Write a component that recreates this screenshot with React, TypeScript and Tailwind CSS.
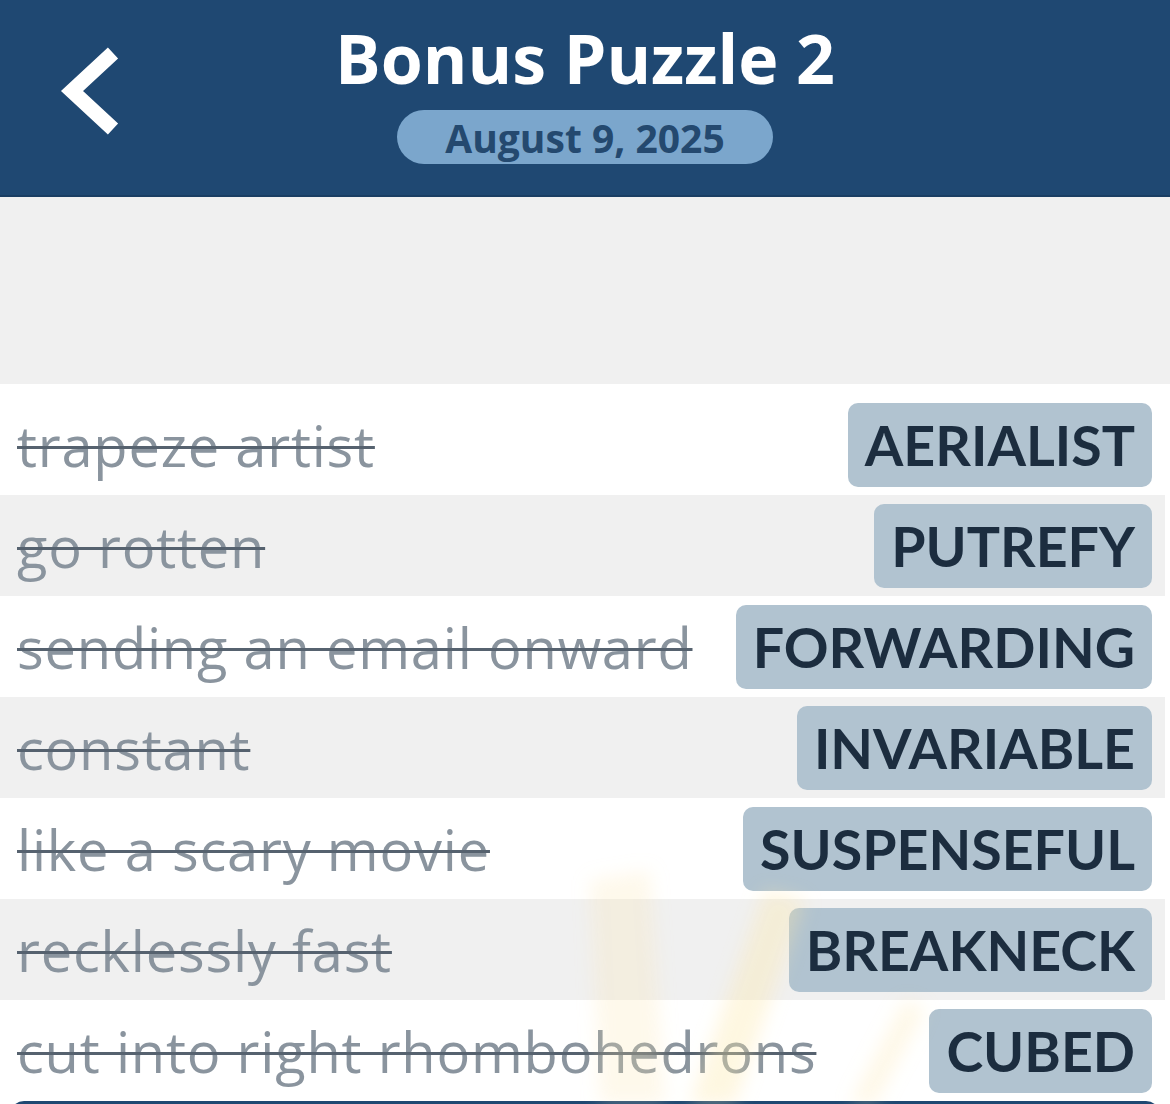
import { useMemo } from "react";

type Entry = { clue: string; answer: string };

const entries: Entry[] = [
  { clue: "trapeze artist", answer: "AERIALIST" },
  { clue: "go rotten", answer: "PUTREFY" },
  { clue: "sending an email onward", answer: "FORWARDING" },
  { clue: "constant", answer: "INVARIABLE" },
  { clue: "like a scary movie", answer: "SUSPENSEFUL" },
  { clue: "recklessly fast", answer: "BREAKNECK" },
  { clue: "cut into right rhombohedrons", answer: "CUBED" },
];

function BackChevron() {
  return (
    <svg width="70" height="100" viewBox="0 0 70 100" fill="none">
      <path
        d="M55 12 L14 50 L55 88"
        stroke="white"
        strokeWidth="15"
        strokeLinecap="butt"
        strokeLinejoin="miter"
      />
    </svg>
  );
}

function Header() {
  return (
    <header className="h-[197px] bg-[#1f4872] border-b-2 border-[#1a3e63] grid grid-cols-[200px_1fr_200px]">
      <div className="flex items-start pt-[41px] pl-[58px]">
        <button className="text-white">
          <BackChevron />
        </button>
      </div>
      <div className="flex flex-col items-center pt-[18px]">
        <h1 className="text-white text-[68px] leading-[80px] font-bold">Bonus Puzzle 2</h1>
        <div className="mt-[12px] h-[54px] w-[376px] rounded-full bg-[#7ba6cc] flex items-center justify-center">
          <span className="text-[#24496f] text-[39px] font-bold leading-none">August 9, 2025</span>
        </div>
      </div>
      <div />
    </header>
  );
}

function Row({ entry, index }: { entry: Entry; index: number }) {
  const bg = index % 2 === 0 ? "bg-white" : "bg-[#f0f0f0]";
  return (
    <div className={`${bg} h-[101px] flex items-center justify-between pl-[17px] pr-[13px]`}>
      <span className="text-[56px] tracking-[0.8px] text-[#8a949e] line-through decoration-[#56626f] decoration-[2.5px] whitespace-nowrap">
        {entry.clue}
      </span>
      <span className="h-[84px] px-[17px] rounded-[10px] bg-[#b1c3d0] flex items-center text-[#1c2d3f] font-bold text-[55.5px] font-['Lato',sans-serif] whitespace-nowrap">
        {entry.answer}
      </span>
    </div>
  );
}

function Glare() {
  return (
    <svg
      className="absolute left-0 top-[850px] pointer-events-none"
      width="1170"
      height="254"
      viewBox="0 0 1170 254"
    >
      <defs>
        <filter id="soft" x="-20%" y="-20%" width="140%" height="140%">
          <feGaussianBlur stdDeviation="9" />
        </filter>
      </defs>
      <g filter="url(#soft)">
        <polygon points="590,30 650,20 665,254 600,254" fill="#fde9b0" opacity="0.25" />
        <polygon points="765,40 805,50 735,254 690,254" fill="#fde7a8" opacity="0.35" />
        <polygon points="905,150 925,160 875,254 850,254" fill="#fde7a8" opacity="0.28" />
      </g>
    </svg>
  );
}

export default function App() {
  const rows = useMemo(() => entries, []);
  return (
    <div className="relative w-[1170px] h-[1104px] overflow-hidden bg-white font-['Open_Sans',sans-serif]">
      <Header />
      <div className="h-[187px] bg-[#f0f0f0]" />
      <div className="bg-white pt-[10px] pr-[5px]">
        {rows.map((e, i) => (
          <Row key={e.answer} entry={e} index={i} />
        ))}
      </div>
      <div className="mx-[10px] h-[40px] rounded-t-[14px] bg-[#1f4872]" />
      <Glare />
    </div>
  );
}
